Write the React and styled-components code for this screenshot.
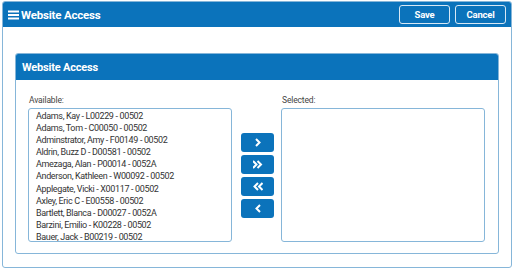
import React from 'react';
import styled, { createGlobalStyle } from 'styled-components';

const GlobalStyle = createGlobalStyle`
  html, body {
    margin: 0;
    padding: 0;
    background: #fff;
    font-family: Roboto, "Liberation Sans", sans-serif;
  }
`

const Page = styled.div`
  padding: 1px 0 0 2px;
`

const Frame = styled.div`
  width: 508px;
  height: 265px;
  border: 1px solid #86b6d9;
  border-radius: 3px;
  display: flex;
  flex-direction: column;
  overflow: hidden;
`

const TopBar = styled.div`
  height: 26px;
  background: #0b73bb;
  display: flex;
  align-items: center;
  justify-content: space-between;
  padding: 0 5px 0 5px;
`

const TopTitle = styled.div`
  display: flex;
  align-items: center;
  gap: 2px;
  color: #fff;
  font-size: 11.5px;
  font-weight: 700;
  letter-spacing: -0.2px;
`

const Actions = styled.div`
  display: flex;
  gap: 5px;
`

const BarButton = styled.button`
  width: 51px;
  height: 19px;
  border: 1px solid #d8e8f4;
  border-radius: 3px;
  background: transparent;
  color: #fff;
  font-family: Roboto, "Liberation Sans", sans-serif;
  font-size: 9.5px;
  font-weight: 700;
  letter-spacing: -0.2px;
  padding: 0;
`

const Body = styled.div`
  flex: 1;
  padding: 26px 12px 13px 12px;
`

const Panel = styled.div`
  border: 1px solid #86b6d9;
  border-radius: 3px;
  overflow: hidden;
`

const PanelHeader = styled.div`
  height: 26px;
  background: #0b73bb;
  color: #fff;
  font-size: 11px;
  font-weight: 700;
  letter-spacing: -0.2px;
  display: flex;
  align-items: center;
  padding-left: 6px;
`

const PanelBody = styled.div`
  display: flex;
  align-items: center;
  padding: 14px 13px 11px 12px;
`

const Column = styled.div`
  display: flex;
  flex-direction: column;
`

const Label = styled.div`
  font-size: 8.5px;
  color: #444;
  line-height: 12px;
  letter-spacing: -0.15px;
  margin-bottom: 2px;
  padding-left: 1px;
`

const ListBox = styled.div`
  height: 131px;
  width: 195px;
  border: 1px solid #86b6d9;
  border-radius: 3px;
  padding: 1px 0 0 7px;
  overflow: hidden;
`

const Item = styled.div`
  font-size: 9px;
  line-height: 12.1px;
  letter-spacing: -0.35px;
  color: #333;
  white-space: nowrap;
`

const Mover = styled.div`
  display: flex;
  flex-direction: column;
  gap: 3px;
  margin: 14px 7px 0 9px;
`

const MoveButton = styled.button`
  width: 33px;
  height: 19px;
  border: none;
  border-radius: 3px;
  background: #0b73bb;
  display: flex;
  align-items: center;
  justify-content: center;
  padding: 0;
`

const Chevron = ({ dir, double }) => {
  const one = dir === 'right' ? 'M3 2 L6.5 5.5 L3 9' : 'M7 2 L3.5 5.5 L7 9';
  const two = dir === 'right' ? 'M0 2 L3.5 5.5 L0 9 M4.5 2 L8 5.5 L4.5 9' : 'M5 2 L1.5 5.5 L5 9 M9.5 2 L6 5.5 L9.5 9';
  return (
    <svg width="10" height="11" viewBox="0 0 10 11">
      <path d={double ? two : one} stroke="#fff" strokeWidth="2" fill="none" />
    </svg>
  );
}

const Hamburger = () => (
  <svg width="11" height="10" viewBox="0 0 11 10">
    <rect x="0" y="0.5" width="11" height="2" fill="#fff" />
    <rect x="0" y="4" width="11" height="2" fill="#fff" />
    <rect x="0" y="7.5" width="11" height="2" fill="#fff" />
  </svg>
)

const people = [
  'Adams, Kay - L00229 - 00502',
  'Adams, Tom - C00050 - 00502',
  'Adminstrator, Amy - F00149 - 00502',
  'Aldrin, Buzz D - D00581 - 00502',
  'Amezaga, Alan - P00014 - 0052A',
  'Anderson, Kathleen - W00092 - 00502',
  'Applegate, Vicki - X00117 - 00502',
  'Axley, Eric C - E00558 - 00502',
  'Bartlett, Blanca - D00027 - 0052A',
  'Barzini, Emilio - K00228 - 00502',
  'Bauer, Jack - B00219 - 00502',
];

const App = () => {
  return (
    <Page>
      <GlobalStyle />
      <Frame>
        <TopBar>
          <TopTitle>
            <Hamburger />
            Website Access
          </TopTitle>
          <Actions>
            <BarButton>Save</BarButton>
            <BarButton>Cancel</BarButton>
          </Actions>
        </TopBar>
        <Body>
          <Panel>
            <PanelHeader>Website Access</PanelHeader>
            <PanelBody>
              <Column>
                <Label>Available:</Label>
                <ListBox>
                  {people.map(p => <Item key={p}>{p}</Item>)}
                </ListBox>
              </Column>
              <Mover>
                <MoveButton><Chevron dir="right" /></MoveButton>
                <MoveButton><Chevron dir="right" double /></MoveButton>
                <MoveButton><Chevron dir="left" double /></MoveButton>
                <MoveButton><Chevron dir="left" /></MoveButton>
              </Mover>
              <Column>
                <Label>Selected:</Label>
                <ListBox />
              </Column>
            </PanelBody>
          </Panel>
        </Body>
      </Frame>
    </Page>
  );
}

export default App
